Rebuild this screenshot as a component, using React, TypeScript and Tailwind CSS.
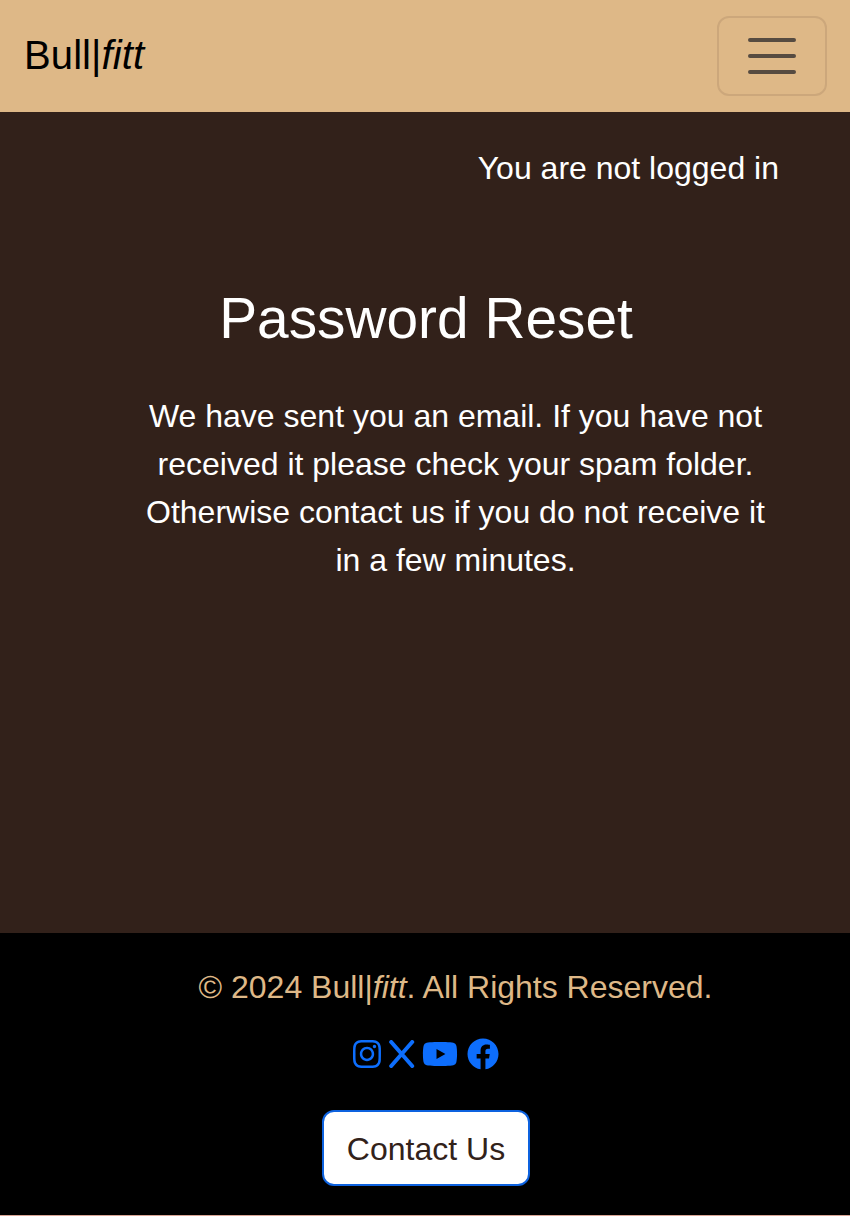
import { FaFacebook } from "react-icons/fa";
import { FaYoutube, FaInstagram } from "react-icons/fa6";

export default function App() {
  return (
    <div className="flex h-[1216px] w-[850px] flex-col overflow-hidden bg-[#32211a] font-['Liberation_Sans',Arial,sans-serif] text-[32px] leading-[48px] text-white">
      <header className="flex h-28 shrink-0 items-center justify-between bg-[#deb887] pr-[23px] pl-6">
        <a className="-mt-[2px] text-[40px] leading-[60px] tracking-[0.1px] text-black">Bull|<i>fitt</i></a>
        <button aria-label="Menu" className="flex h-20 w-[110px] items-center justify-center rounded-xl border-2 border-[#cca77b]">
          <svg className="size-[60px]" viewBox="0 0 30 30" fill="none" stroke="#564b41" strokeWidth="2" strokeLinecap="round">
            <path d="M4 7h22M4 15h22M4 23h22" />
          </svg>
        </button>
      </header>
      <main className="flex h-[821px] shrink-0 flex-col">
        <p className="mt-8 pr-[71px] text-right">You are not logged in</p>
        <h1 className="mt-[93px] pl-[2px] text-center text-[56.8px] leading-[68px]">Password Reset</h1>
        <p className="mt-[39px] ml-[139px] w-[633px] text-center">
          We have sent you an email. If you have not received it please check your spam folder. Otherwise contact us if you do not receive it in a few minutes.
        </p>
      </main>
      <footer className="flex grow flex-col items-center border-b border-b-[#d9a595] bg-black">
        <p className="mt-[30px] ml-[61px] text-[#deb887]">© 2024 Bull|<i>fitt</i>. All Rights Reserved.</p>
        <div className="mt-[27px] mr-px flex h-8 items-center text-[#0d6efd]">
          <FaInstagram size={32} />
          <svg className="ml-[6px] h-7 w-[26px]" viewBox="0 0 26 28" fill="none" stroke="currentColor" strokeWidth="4" strokeLinecap="round">
            <path d="M2.2 2L23.2 26M23.2 2L2.2 26" />
          </svg>
          <FaYoutube className="ml-[7px]" size={36} />
          <FaFacebook className="ml-[9px]" size={32} />
        </div>
        <a className="mt-10 ml-px flex h-[76px] w-[208px] items-center justify-center rounded-xl border-2 border-[#0d62df] bg-white pt-[2px] pl-px text-[#32221a]">Contact Us</a>
      </footer>
    </div>
  );
}
